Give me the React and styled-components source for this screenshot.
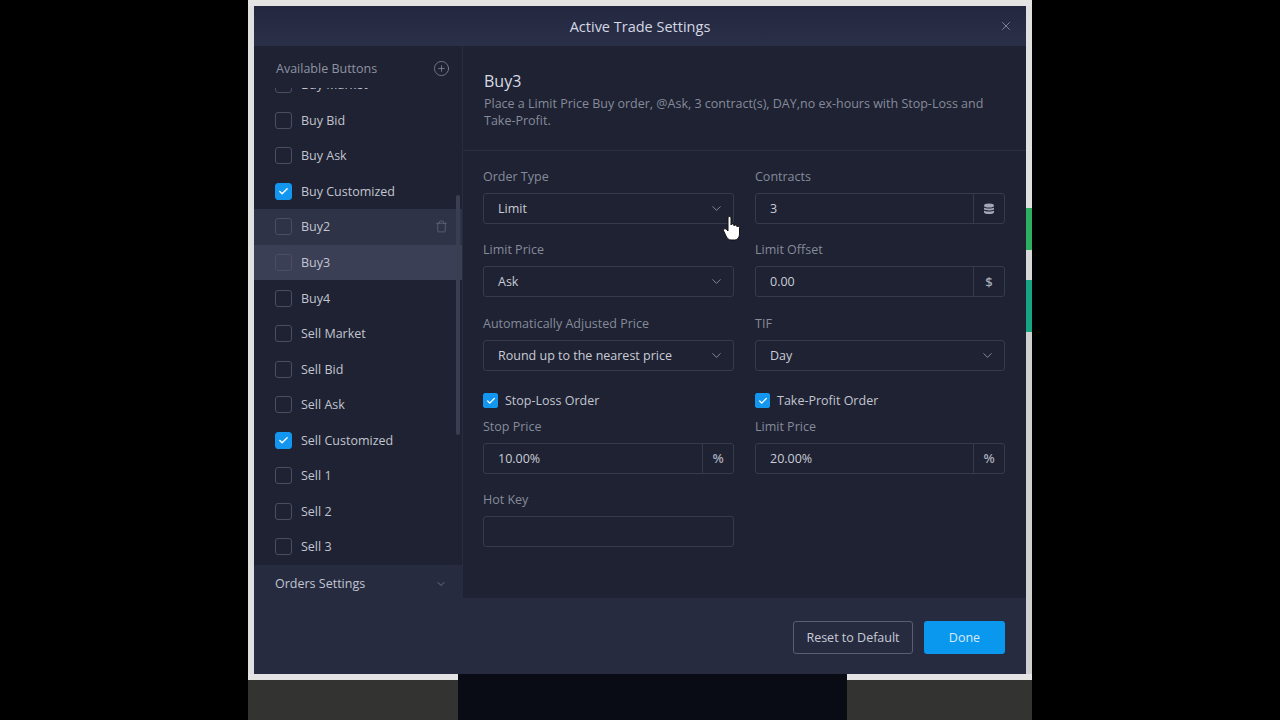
import React from "react";
import styled, { createGlobalStyle } from "styled-components";
import { Check, ChevronDown, CirclePlus, Trash, X } from "lucide-react";

const GlobalStyle = createGlobalStyle`
  html, body {
    margin: 0;
    background: #000;
    font-family: "Open Sans", "Noto Sans", sans-serif;
  }
  * { box-sizing: border-box; }
`;

const Page = styled.div`
  width: 1280px;
  height: 720px;
  display: flex;
  justify-content: center;
  background: #000;
  overflow: hidden;
  position: relative;
`;

const Screen = styled.div`
  width: 784px;
  height: 720px;
  display: flex;
  flex-direction: column;
`;

const Stage = styled.div`
  height: 674px;
  display: flex;
  background: #e4e4e4;
  padding-top: 6px;
`;

const SideEdge = styled.div`
  width: 6px;
  background: #e0e0e0;
`;

const RightEdge = styled(SideEdge)`
  background: linear-gradient(
    to bottom,
    #e0e0e0 0,
    #e0e0e0 202px,
    #2fae62 202px,
    #2fae62 244px,
    #d8d8d8 244px,
    #d8d8d8 274px,
    #16a583 274px,
    #16a583 326px,
    #d0d0d0 326px
  );
`;

const Modal = styled.div`
  width: 772px;
  height: 668px;
  display: flex;
  flex-direction: column;
  background: #262b40;
  color: #c9ccd6;
`;

const Header = styled.div`
  height: 40px;
  flex: none;
  display: flex;
  align-items: center;
  justify-content: center;
  position: relative;
  background: linear-gradient(to bottom, #232840, #2b3049);
  font-size: 14.5px;
  color: #d5d8e2;
`;

const CloseButton = styled.span`
  position: absolute;
  right: 13px;
  top: 13px;
  display: flex;
  color: #a4a8b6;
`;

const Body = styled.div`
  height: 552px;
  flex: none;
  display: flex;
`;

const Sidebar = styled.div`
  width: 208px;
  flex: none;
  display: flex;
  flex-direction: column;
  position: relative;
`;

const SidebarTop = styled.div`
  height: 42px;
  flex: none;
  display: flex;
  align-items: center;
  justify-content: space-between;
  padding: 3px 12px 0 22px;
  background: #1e2232;
  font-size: 12.5px;
  color: #8e92a2;
`;

const List = styled.div`
  height: 477px;
  flex: none;
  overflow: hidden;
  background: #1e2232;
`;

const ListInner = styled.div`
  margin-top: -21px;
`;

const Row = styled.div`
  height: 35.55px;
  display: flex;
  align-items: center;
  gap: 9px;
  padding: 0 14px 0 21px;
  font-size: 12.5px;
  color: #c2c5d0;
  background: ${(p) => (p.$active ? "#3a3f56" : p.$hover ? "#2f3347" : "transparent")};
`;

const RowLabel = styled.span`
  flex: 1;
`;

const Box = styled.span`
  width: 17px;
  height: 17px;
  flex: none;
  display: flex;
  align-items: center;
  justify-content: center;
  border-radius: 3px;
  border: 1px solid ${(p) => (p.$checked ? "#1296f0" : "#4a4e60")};
  background: ${(p) => (p.$checked ? "#1296f0" : "transparent")};
  color: #fff;
`;

const TrashIcon = styled.span`
  display: flex;
  color: #6f7386;
`;

const ScrollThumb = styled.div`
  position: absolute;
  left: 202px;
  top: 149px;
  width: 4px;
  height: 240px;
  border-radius: 2px;
  background: #3a3e50;
`;

const Accordion = styled.div`
  height: 33px;
  flex: none;
  display: flex;
  align-items: center;
  justify-content: space-between;
  padding: 4px 15px 0 21px;
  font-size: 12.5px;
  color: #c2c5d0;
`;

const AccordionIcon = styled.span`
  display: flex;
  color: #858a9a;
`;

const Main = styled.div`
  flex: 1;
  margin-left: 1px;
  background: #1e2232;
  display: flex;
  flex-direction: column;
`;

const Intro = styled.div`
  height: 105px;
  flex: none;
  padding: 24px 30px 0 21px;
  border-bottom: 1px solid #2a2e40;
`;

const Title = styled.div`
  font-size: 16px;
  line-height: 22px;
  color: #d8dbe4;
`;

const Description = styled.div`
  margin-top: 3px;
  font-size: 12.5px;
  line-height: 17px;
  color: #868b9b;
`;

const Form = styled.div`
  padding: 16px 21px 0 20px;
  display: grid;
  grid-template-columns: 251px 250px;
  column-gap: 21px;
  align-content: start;
`;

const Field = styled.div`
  height: 73.3px;
  display: flex;
  flex-direction: column;
`;

const Label = styled.div`
  height: 20px;
  margin-bottom: 6px;
  font-size: 12.5px;
  line-height: 20px;
  color: #868b9b;
`;

const Control = styled.div`
  height: 31px;
  display: flex;
  align-items: center;
  border: 1px solid #363a4c;
  border-radius: 3px;
  font-size: 12.5px;
  color: #c9ccd6;
`;

const ControlText = styled.span`
  flex: 1;
  padding-left: 14px;
`;

const ChevronSlot = styled.span`
  display: flex;
  margin-right: 9px;
  color: #a4a8b6;
`;

const Addon = styled.span`
  width: 31px;
  height: 100%;
  flex: none;
  display: flex;
  align-items: center;
  justify-content: center;
  border-left: 1px solid #363a4c;
  font-size: 13px;
  font-weight: 600;
  color: #a4a8b6;
`;

const CheckField = styled.div`
  height: 32px;
  display: flex;
  align-items: center;
  gap: 7px;
  margin-top: -2px;
  font-size: 12.5px;
  color: #c2c5d0;
`;

const SmallBox = styled(Box)`
  width: 15px;
  height: 15px;
  border-radius: 2px;
`;

const Footer = styled.div`
  flex: 1;
  display: flex;
  align-items: center;
  justify-content: flex-end;
  gap: 11px;
  padding: 2px 21px 0 0;
  background: #262b40;
`;

const ResetButton = styled.button`
  width: 120px;
  height: 33px;
  border: 1px solid #5a5e70;
  border-radius: 3px;
  background: transparent;
  font: inherit;
  font-size: 12.5px;
  color: #c9ccd6;
`;

const DoneButton = styled.button`
  width: 81px;
  height: 33px;
  border: 0;
  border-radius: 3px;
  background: #0a97ee;
  font: inherit;
  font-size: 12.5px;
  color: #d5ecfb;
`;

const BottomStrip = styled.div`
  flex: 1;
  display: flex;
`;

const StripSide = styled.div`
  width: ${(p) => p.$width}px;
  border-top: 6px solid #e4e4e4;
  background: #333331;
`;

const StripCenter = styled.div`
  flex: 1;
  background: #090c14;
`;

const Cursor = styled.svg`
  position: absolute;
  left: 723px;
  top: 216px;
`;

const rows = [
  { label: "Buy Market" },
  { label: "Buy Bid" },
  { label: "Buy Ask" },
  { label: "Buy Customized", checked: true },
  { label: "Buy2", hover: true },
  { label: "Buy3", active: true },
  { label: "Buy4" },
  { label: "Sell Market" },
  { label: "Sell Bid" },
  { label: "Sell Ask" },
  { label: "Sell Customized", checked: true },
  { label: "Sell 1" },
  { label: "Sell 2" },
  { label: "Sell 3" },
];

function CoinsIcon() {
  return (
    <svg width="12" height="12" viewBox="0 0 12 12" fill="currentColor">
      <ellipse cx="6" cy="2.4" rx="5" ry="2" />
      <path d="M1 4.4c1 1.3 9 1.3 10 0v1.8c-1 1.6-9 1.6-10 0z" />
      <path d="M1 7.6c1 1.3 9 1.3 10 0v1.8c-1 2-9 2-10 0z" />
    </svg>
  );
}

function Select({ value }) {
  return (
    <Control>
      <ControlText>{value}</ControlText>
      <ChevronSlot>
        <ChevronDown size={15} strokeWidth={1.2} />
      </ChevronSlot>
    </Control>
  );
}

function Input({ value, addon }) {
  return (
    <Control>
      <ControlText>{value}</ControlText>
      {addon && <Addon>{addon}</Addon>}
    </Control>
  );
}

export default function App() {
  return (
    <Page>
      <GlobalStyle />
      <Screen>
        <Stage>
          <SideEdge />
          <Modal>
            <Header>
              Active Trade Settings
              <CloseButton>
                <X size={14} strokeWidth={1.2} />
              </CloseButton>
            </Header>
            <Body>
              <Sidebar>
                <SidebarTop>
                  Available Buttons
                  <CirclePlus size={17} strokeWidth={1} />
                </SidebarTop>
                <List>
                  <ListInner>
                    {rows.map((r) => (
                      <Row key={r.label} $active={r.active} $hover={r.hover}>
                        <Box $checked={r.checked}>
                          {r.checked && <Check size={11} strokeWidth={3} />}
                        </Box>
                        <RowLabel>{r.label}</RowLabel>
                        {r.hover && (
                          <TrashIcon>
                            <Trash size={13} strokeWidth={1.2} />
                          </TrashIcon>
                        )}
                      </Row>
                    ))}
                  </ListInner>
                </List>
                <ScrollThumb />
                <Accordion>
                  Orders Settings
                  <AccordionIcon>
                    <ChevronDown size={12} strokeWidth={1.4} />
                  </AccordionIcon>
                </Accordion>
              </Sidebar>
              <Main>
                <Intro>
                  <Title>Buy3</Title>
                  <Description>
                    Place a Limit Price Buy order, @Ask, 3 contract(s), DAY,no ex-hours with Stop-Loss and Take-Profit.
                  </Description>
                </Intro>
                <Form>
                  <Field>
                    <Label>Order Type</Label>
                    <Select value="Limit" />
                  </Field>
                  <Field>
                    <Label>Contracts</Label>
                    <Input value="3" addon={<CoinsIcon />} />
                  </Field>
                  <Field>
                    <Label>Limit Price</Label>
                    <Select value="Ask" />
                  </Field>
                  <Field>
                    <Label>Limit Offset</Label>
                    <Input value="0.00" addon="$" />
                  </Field>
                  <Field>
                    <Label>Automatically Adjusted Price</Label>
                    <Select value="Round up to the nearest price" />
                  </Field>
                  <Field>
                    <Label>TIF</Label>
                    <Select value="Day" />
                  </Field>
                  <CheckField>
                    <SmallBox $checked>
                      <Check size={10} strokeWidth={3} />
                    </SmallBox>
                    Stop-Loss Order
                  </CheckField>
                  <CheckField>
                    <SmallBox $checked>
                      <Check size={10} strokeWidth={3} />
                    </SmallBox>
                    Take-Profit Order
                  </CheckField>
                  <Field>
                    <Label>Stop Price</Label>
                    <Input value="10.00%" addon="%" />
                  </Field>
                  <Field>
                    <Label>Limit Price</Label>
                    <Input value="20.00%" addon="%" />
                  </Field>
                  <Field>
                    <Label>Hot Key</Label>
                    <Input value="" />
                  </Field>
                </Form>
              </Main>
            </Body>
            <Footer>
              <ResetButton>Reset to Default</ResetButton>
              <DoneButton>Done</DoneButton>
            </Footer>
          </Modal>
          <RightEdge />
        </Stage>
        <BottomStrip>
          <StripSide $width={210} />
          <StripCenter />
          <StripSide $width={185} />
        </BottomStrip>
      </Screen>
      <Cursor width="17" height="25" viewBox="0 0 17 25">
        <path
          d="M5 2c0-2 3-2 3 0v7c0-1.500 3-1.500 3 0v1c0-1.300 3-1.300 3 0v1c0-1 2.500-1 2.500 .5V18c0 3-2 6-5 6H8c-2.500 0-3.500-1.500-5-4L.7 15c-.9-2 1.500-3 2.800-1.500L5 15z"
          fill="#fff"
          stroke="#111"
          strokeWidth="1"
        />
      </Cursor>
    </Page>
  );
}
